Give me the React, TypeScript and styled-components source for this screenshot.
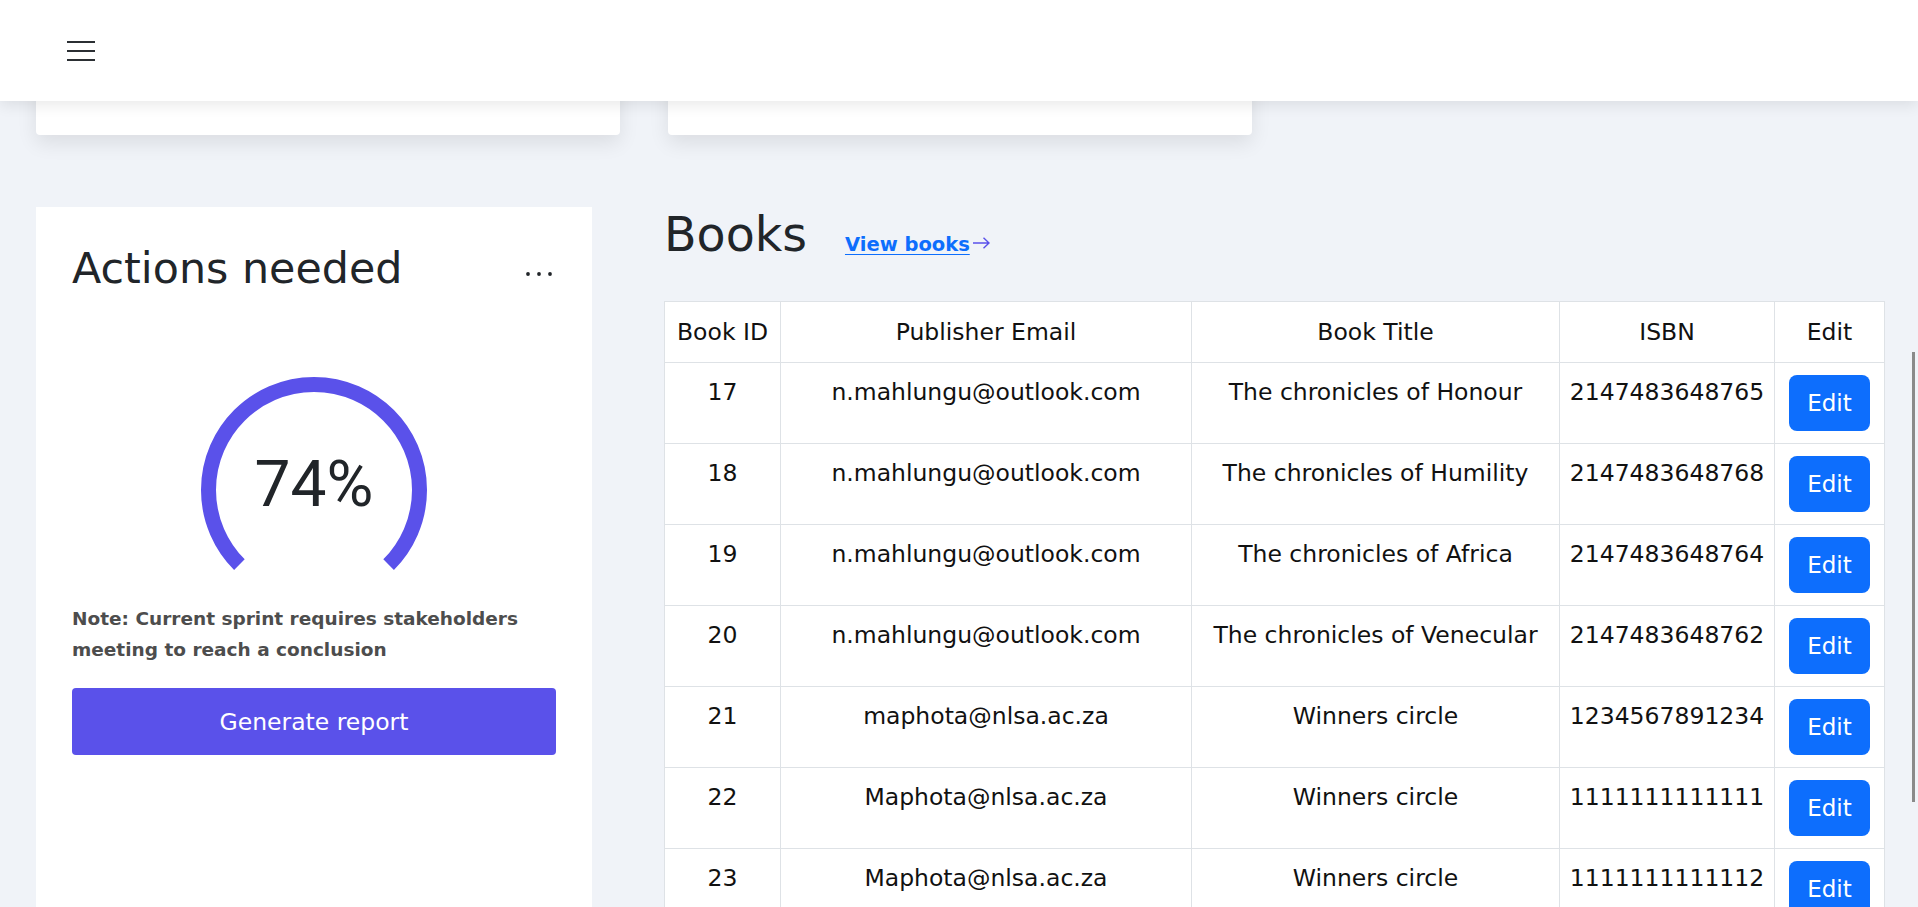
import React from 'react';
import styled, { createGlobalStyle } from 'styled-components';

const GlobalStyle = createGlobalStyle`
  *, *::before, *::after { box-sizing: border-box; }
  html, body { margin: 0; padding: 0; height: 100%; overflow: hidden; }
  body {
    background: #f0f3f8;
    font-family: "DejaVu Sans", "Noto Sans", sans-serif;
    color: #212529;
  }
`;

const TopBar = styled.header`
  position: fixed;
  top: 0;
  left: 0;
  right: 0;
  height: 101px;
  background: #ffffff;
  box-shadow: 0 4px 14px rgba(0, 0, 0, 0.09);
  display: flex;
  align-items: center;
  padding-left: 67px;
  z-index: 10;
`;

const MenuButton = styled.button`
  border: none;
  background: none;
  padding: 0;
  display: flex;
  cursor: pointer;
`;

const Page = styled.main`
  padding: 0 34px 0 36px;
`;

const StatRow = styled.div`
  display: grid;
  grid-template-columns: repeat(2, 584px);
  column-gap: 48px;
`;

const StatCard = styled.div`
  height: 135px;
  background: #ffffff;
  border-radius: 0 0 4px 4px;
  box-shadow: 0 8px 20px rgba(0, 0, 0, 0.09);
`;

const ContentRow = styled.div`
  display: grid;
  grid-template-columns: 556px 1fr;
  column-gap: 72px;
  margin-top: 72px;
  align-items: stretch;
`;

const ActionsCard = styled.section`
  background: #ffffff;
  padding: 36px 36px 0;
  display: flex;
  flex-direction: column;
`;

const CardHeader = styled.div`
  display: flex;
  justify-content: space-between;
  align-items: center;
`;

const CardTitle = styled.h2`
  margin: 0;
  font-size: 42.8px;
  font-weight: 400;
  line-height: 51px;
  color: #212529;
`;

const MoreButton = styled.button`
  border: none;
  background: none;
  padding: 11px 0 0 0;
  display: flex;
  cursor: pointer;
`;

const GaugeWrap = styled.div`
  position: relative;
  align-self: center;
  width: 226px;
  height: 194px;
  margin-top: 83px;
`;

const GaugeValue = styled.div`
  position: absolute;
  left: 0;
  right: 0;
  top: 76px;
  text-align: center;
  font-family: Roboto, "Noto Sans", sans-serif;
  font-size: 64px;
  line-height: 1;
  color: #212529;
`;

const Note = styled.p`
  margin: 33px 0 0;
  font-size: 18.5px;
  font-weight: 700;
  line-height: 30.7px;
  color: #4d4d4d;
`;

const ReportButton = styled.button`
  margin-top: 23px;
  height: 67px;
  width: 100%;
  background: #5a51ea;
  color: #ffffff;
  border: none;
  border-radius: 4px;
  font-family: "DejaVu Sans", sans-serif;
  font-size: 23.5px;
  cursor: pointer;
`;

const BooksSection = styled.section`
  min-width: 0;
`;

const BooksHeader = styled.div`
  display: flex;
  align-items: baseline;
  gap: 38px;
`;

const BooksTitle = styled.h2`
  margin: 0;
  font-size: 47.5px;
  font-weight: 400;
  line-height: 56px;
  color: #212529;
`;

const ViewLink = styled.a`
  font-size: 19.5px;
  font-weight: 700;
  color: #0d6efd;
  text-decoration: underline;
  text-underline-offset: 3px;
  cursor: pointer;

  svg {
    margin-left: 3px;
    vertical-align: 2px;
  }
`;

const Table = styled.table`
  margin-top: 38px;
  width: 100%;
  border-collapse: collapse;
  table-layout: fixed;
  background: #ffffff;
  font-size: 23.5px;
  line-height: 34px;
  color: #111111;
`;

const Col = styled.col<{ $w: number }>`
  width: ${(p) => p.$w}px;
`;

const Th = styled.th`
  border: 1px solid #dee2e6;
  padding: 13px 8px;
  text-align: center;
  vertical-align: top;
  font-weight: 400;
  white-space: nowrap;
`;

const Td = styled.td`
  border: 1px solid #dee2e6;
  padding: 12px 8px;
  text-align: center;
  vertical-align: top;
  white-space: nowrap;
`;

const EditButton = styled.button`
  display: block;
  margin: 0 auto;
  width: 81px;
  height: 56px;
  padding: 0;
  background: #0d6efd;
  color: #ffffff;
  border: none;
  border-radius: 8px;
  font-family: "DejaVu Sans", sans-serif;
  font-size: 23px;
  cursor: pointer;
`;

const ScrollThumb = styled.div`
  position: fixed;
  right: 3px;
  top: 352px;
  width: 3px;
  height: 450px;
  background: #8a8a8a;
  z-index: 20;
`;

const books = [
  { id: 17, email: 'n.mahlungu@outlook.com', title: 'The chronicles of Honour', isbn: '2147483648765' },
  { id: 18, email: 'n.mahlungu@outlook.com', title: 'The chronicles of Humility', isbn: '2147483648768' },
  { id: 19, email: 'n.mahlungu@outlook.com', title: 'The chronicles of Africa', isbn: '2147483648764' },
  { id: 20, email: 'n.mahlungu@outlook.com', title: 'The chronicles of Venecular', isbn: '2147483648762' },
  { id: 21, email: 'maphota@nlsa.ac.za', title: 'Winners circle', isbn: '1234567891234' },
  { id: 22, email: 'Maphota@nlsa.ac.za', title: 'Winners circle', isbn: '1111111111111' },
  { id: 23, email: 'Maphota@nlsa.ac.za', title: 'Winners circle', isbn: '1111111111112' },
];

const Gauge = () => {
  const c = 113;
  const r = 105.5;
  const x1 = c - r * Math.sin(Math.PI / 4);
  const y1 = c + r * Math.cos(Math.PI / 4);
  const x2 = c + r * Math.sin(Math.PI / 4);
  return (
    <svg width="226" height="194" viewBox="0 0 226 194">
      <path
        d={`M ${x1} ${y1} A ${r} ${r} 0 1 1 ${x2} ${y1}`}
        fill="none"
        stroke="#5a51ea"
        strokeWidth="15"
        strokeLinecap="butt"
      />
    </svg>
  );
};

export default function App() {
  return (
    <>
      <GlobalStyle />
      <TopBar>
        <MenuButton aria-label="menu">
          <svg width="28" height="20" viewBox="0 0 28 20">
            <path d="M0 1h28M0 10h28M0 19h28" stroke="#2b2f33" strokeWidth="2" />
          </svg>
        </MenuButton>
      </TopBar>
      <Page>
        <StatRow>
          <StatCard />
          <StatCard />
        </StatRow>
        <ContentRow>
          <ActionsCard>
            <CardHeader>
              <CardTitle>Actions needed</CardTitle>
              <MoreButton aria-label="more">
                <svg width="30" height="4" viewBox="0 0 30 4">
                  <circle cx="2" cy="2" r="1.9" fill="#212529" />
                  <circle cx="13" cy="2" r="1.9" fill="#212529" />
                  <circle cx="24" cy="2" r="1.9" fill="#212529" />
                </svg>
              </MoreButton>
            </CardHeader>
            <GaugeWrap>
              <Gauge />
              <GaugeValue>74%</GaugeValue>
            </GaugeWrap>
            <Note>Note: Current sprint requires stakeholders meeting to reach a conclusion</Note>
            <ReportButton>Generate report</ReportButton>
          </ActionsCard>
          <BooksSection>
            <BooksHeader>
              <BooksTitle>Books</BooksTitle>
              <ViewLink>
                View books
                <svg width="17" height="12" viewBox="0 0 17 12">
                  <path d="M0 6h16M10.5 0.7L16 6l-5.5 5.3" fill="none" stroke="#5a51ea" strokeWidth="1.4" />
                </svg>
              </ViewLink>
            </BooksHeader>
            <Table>
              <colgroup>
                <Col $w={116} />
                <Col $w={411} />
                <Col $w={368} />
                <Col $w={215} />
                <Col $w={110} />
              </colgroup>
              <thead>
                <tr>
                  <Th>Book ID</Th>
                  <Th>Publisher Email</Th>
                  <Th>Book Title</Th>
                  <Th>ISBN</Th>
                  <Th>Edit</Th>
                </tr>
              </thead>
              <tbody>
                {books.map((b) => (
                  <tr key={b.id}>
                    <Td>{b.id}</Td>
                    <Td>{b.email}</Td>
                    <Td>{b.title}</Td>
                    <Td>{b.isbn}</Td>
                    <Td>
                      <EditButton>Edit</EditButton>
                    </Td>
                  </tr>
                ))}
              </tbody>
            </Table>
          </BooksSection>
        </ContentRow>
      </Page>
      <ScrollThumb />
    </>
  );
}
